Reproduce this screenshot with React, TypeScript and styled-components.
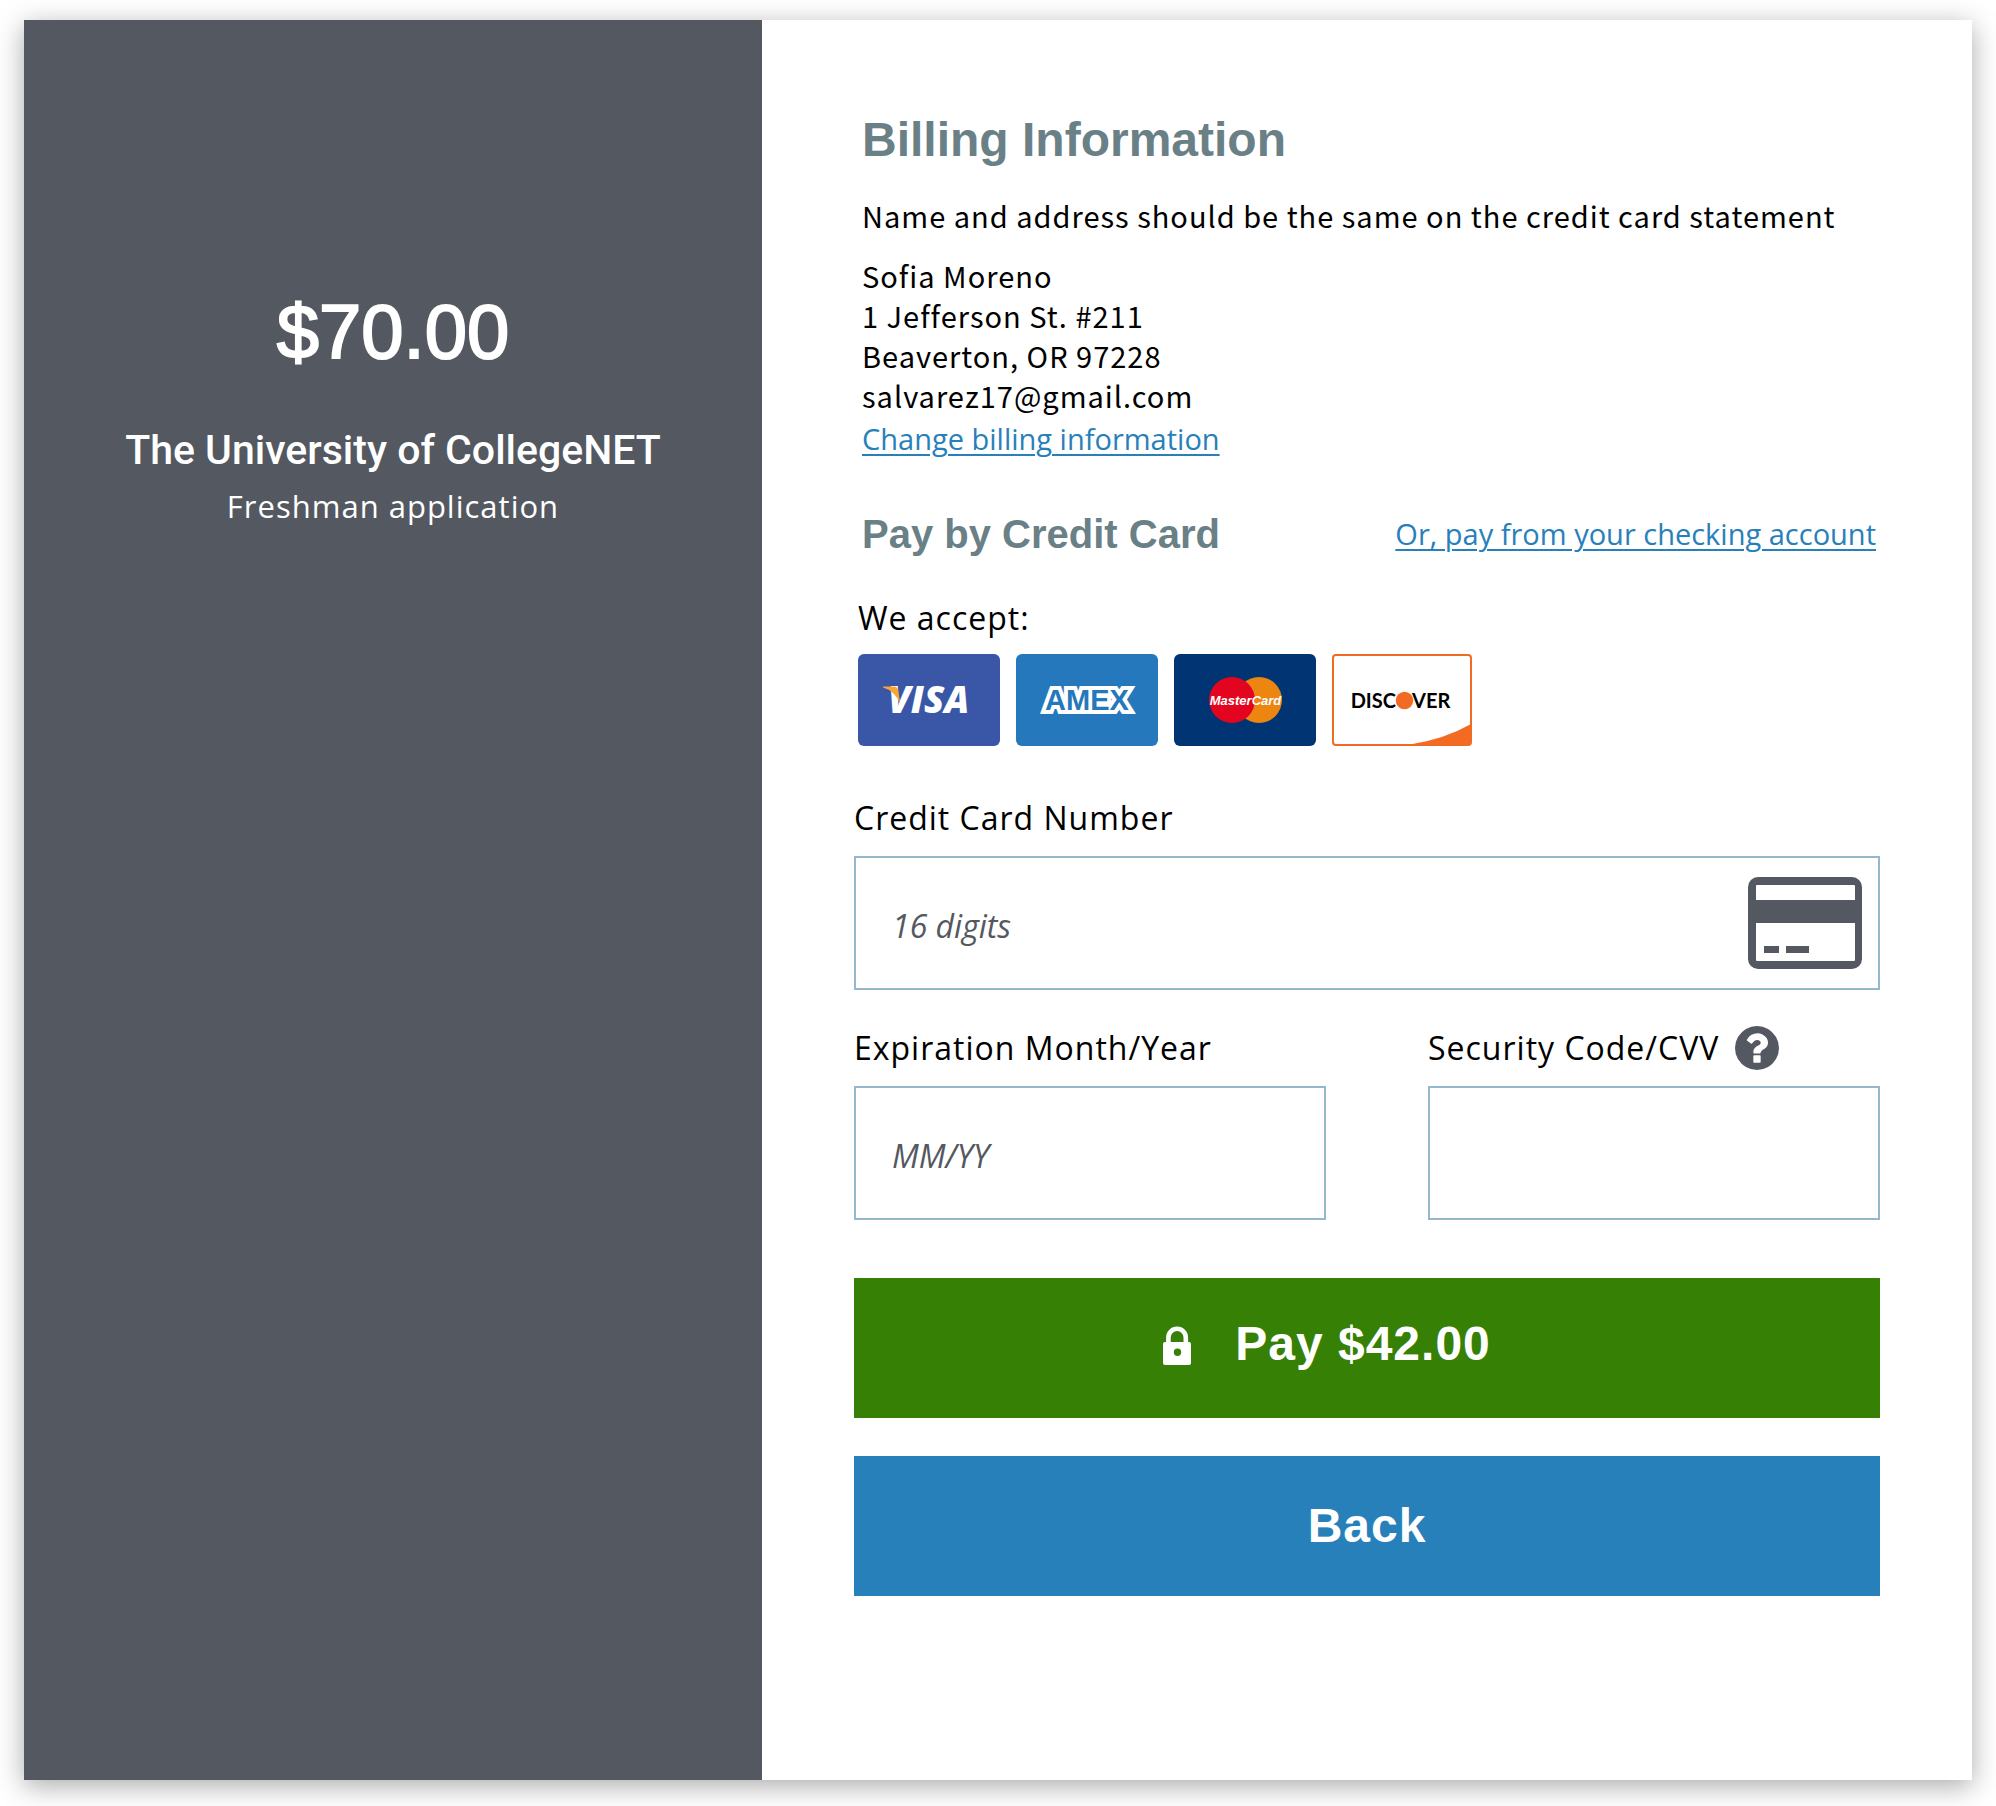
import React from "react";
import styled, { createGlobalStyle } from "styled-components";

const slate = "#545860";
const blue = "#2880ba";
const heading = "#6a8087";
const fieldBorder = "#95b8cc";

const humanist = `"Open Sans", "Noto Sans", sans-serif`;
const grotesk = `"Liberation Sans", Arial, sans-serif`;
const source = `"Noto Sans CJK JP", "Noto Sans", sans-serif`;

const GlobalStyle = createGlobalStyle`
  *, *::before, *::after { box-sizing: border-box; }
  body { margin: 0; background: #fff; color: #000; font-family: ${humanist}; }
  h1, h2, p, address { margin: 0; }
`;

const Page = styled.div`
  display: flex;
  min-height: 100vh;
  padding: 20px 24px 26px;
`;

const Card = styled.main`
  flex: 1;
  display: grid;
  grid-template-columns: minmax(0, 738fr) minmax(0, 1210fr);
  background: #fff;
  box-shadow: 0 6px 26px rgba(0, 0, 0, 0.34);
`;

const Summary = styled.aside`
  display: flex;
  flex-direction: column;
  align-items: center;
  padding: 268px 24px 24px;
  background: ${slate};
  color: #fff;
  text-align: center;
`;

const Price = styled.p`
  font: 400 76px/88px ${grotesk};
  -webkit-text-stroke: 2px #fff;
`;

const School = styled.h2`
  margin-top: 50px;
  font: 500 41px/48px Roboto, sans-serif;
`;

const Application = styled.p`
  margin-top: 8px;
  font-size: 31px;
  line-height: 48px;
  letter-spacing: 1px;
`;

const Details = styled.section`
  display: flex;
  flex-direction: column;
  padding: 92px;
`;

const Billing = styled.section`
  display: flex;
  flex-direction: column;
  align-items: flex-start;
  padding: 0 8px;
`;

const Title = styled.h1`
  color: ${heading};
  font: 700 48px/56px ${grotesk};
`;

const Subtitle = styled.h2`
  color: ${heading};
  font: 700 40px/48px ${grotesk};
`;

const Note = styled.p`
  margin-top: 27px;
  font: 400 29px/40px ${source};
  letter-spacing: 1px;
`;

const Address = styled.address`
  display: flex;
  flex-direction: column;
  margin: 20px 0 4px;
  font: 400 29px/40px ${source};
  letter-spacing: 1px;
`;

const TextLink = styled.a`
  color: ${blue};
  font-size: 29px;
  line-height: 40px;
  text-decoration: underline;
  text-decoration-thickness: 2px;
  text-underline-offset: 4px;
`;

const MethodRow = styled.div`
  display: flex;
  align-items: center;
  justify-content: space-between;
  gap: 24px;
  margin-top: 51px;
  padding: 0 4px 0 8px;
`;

const Accepted = styled.div`
  margin-top: 40px;
  padding: 0 4px;
  font-size: 32px;
  line-height: 40px;
  letter-spacing: 1px;
`;

const Brands = styled.ul`
  display: flex;
  flex-wrap: wrap;
  gap: 16px;
  margin: 16px 0 0;
  padding: 0;
  list-style: none;
  letter-spacing: normal;

  li, svg { display: block; }
`;

const Form = styled.form`
  display: flex;
  flex-direction: column;
  margin-top: 52px;
`;

const FieldPair = styled.div`
  display: grid;
  grid-template-columns: minmax(0, 472fr) minmax(0, 452fr);
  gap: 102px;
  margin-top: 38px;
`;

const Field = styled.div`
  display: flex;
  flex-direction: column;
  gap: 18px;
`;

const LabelRow = styled.div`
  display: flex;
  align-items: center;
  gap: 16px;
  height: 40px;
`;

const Label = styled.label`
  font-size: 32px;
  line-height: 40px;
  letter-spacing: 1px;
`;

const InputBox = styled.div`
  display: flex;
  align-items: center;
  height: 134px;
  border: 2px solid ${fieldBorder};
  padding-right: 16px;
`;

const Input = styled.input`
  flex: 1;
  min-width: 0;
  height: 100%;
  border: 0;
  padding: 4px 0 0 36px;
  background: transparent;
  color: #000;
  font: 400 32px ${humanist};

  &::placeholder {
    color: ${slate};
    font-style: italic;
    opacity: 1;
  }
`;

const HelpButton = styled.button`
  display: flex;
  border: 0;
  padding: 0;
  background: none;
  color: ${slate};
`;

const Actions = styled.div`
  display: grid;
  gap: 38px;
  margin-top: 58px;
`;

const Action = styled.button<{ $tone: string; $withIcon?: boolean }>`
  display: grid;
  grid-template-columns: ${(p) => (p.$withIcon ? "1fr auto 1fr" : "auto")};
  justify-content: center;
  align-items: center;
  column-gap: 44px;
  height: 140px;
  border: 0;
  padding: ${(p) => (p.$withIcon ? "0 8px 8px 0" : "0")};
  background: ${(p) => p.$tone};
  color: #fff;
  font: 700 48px/56px ${grotesk};
  letter-spacing: 1px;

  svg { justify-self: end; }
`;

const VisaLogo = () => (
  <svg width="142" height="92" viewBox="0 0 142 92" role="img" aria-label="Visa">
    <rect width="142" height="92" rx="6" fill="#3a57a7" />
    <text x="30" y="59" fill="#fff" fontFamily="Open Sans" fontSize="37" fontWeight="800" fontStyle="italic">VISA</text>
    <path d="M25 32.500h10.500q4 0 4.700 4l2 12.500Q36 36.500 25 33.500z" fill="#f9a533" />
  </svg>
);

const AmexLogo = () => (
  <svg width="142" height="92" viewBox="0 0 142 92" role="img" aria-label="American Express">
    <rect width="142" height="92" rx="6" fill="#2478bb" />
    <text
      x="71"
      y="56"
      textAnchor="middle"
      fill="#2478bb"
      stroke="#fff"
      strokeWidth="8"
      strokeMiterlimit="3"
      paintOrder="stroke"
      fontFamily="Liberation Sans"
      fontSize="29"
      fontWeight="700"
    >
      AMEX
    </text>
  </svg>
);

const MasterCardLogo = () => (
  <svg width="142" height="92" viewBox="0 0 142 92" role="img" aria-label="MasterCard">
    <rect width="142" height="92" rx="6" fill="#003473" />
    <circle cx="85" cy="46" r="23" fill="#ed8611" />
    <circle cx="58" cy="46" r="23" fill="#e3051f" />
    <text x="71.500" y="51" textAnchor="middle" fill="#fff" fontFamily="Liberation Sans" fontSize="13" fontWeight="700" fontStyle="italic">MasterCard</text>
  </svg>
);

const DiscoverLogo = () => (
  <svg width="140" height="92" viewBox="0 0 140 92" role="img" aria-label="Discover">
    <rect x="1" y="1" width="138" height="90" rx="3" fill="#fff" stroke="#f36a22" strokeWidth="2" />
    <path d="M78 90.500Q113 85 139 70v20.500z" fill="#f36a22" />
    <text x="64" y="54" textAnchor="end" fill="#000" fontFamily="Lato" fontSize="20" fontWeight="700">DISC</text>
    <text x="80" y="54" fill="#000" fontFamily="Lato" fontSize="20" fontWeight="700">VER</text>
    <circle cx="72.500" cy="46.500" r="8.700" fill="#f36a22" />
  </svg>
);

const CardIcon = () => (
  <svg width="114" height="92" viewBox="0 0 114 92" fill={slate} aria-hidden="true">
    <path
      fillRule="evenodd"
      d="M10 0h94a10 10 0 0 1 10 10v72a10 10 0 0 1-10 10H10A10 10 0 0 1 0 82V10A10 10 0 0 1 10 0zM9 8q-1 0-1 1v14h99V9q0-1-1-1zM8 46v37q0 1 1 1h97q1 0 1-1V46z"
    />
    <path d="M16 69h15v7H16zM38 69h23v7H38z" />
  </svg>
);

const HelpIcon = () => (
  <svg width="44" height="44" viewBox="0 128 1536 1536" fill="currentColor" aria-hidden="true">
    <path d="M896 1376v-192q0-14-9-23t-23-9h-192q-14 0-23 9t-9 23v192q0 14 9 23t23 9h192q14 0 23-9t9-23zM1152 704q0-88-55.500-163t-138.500-116-170-41q-243 0-371 213-15 24 8 42l132 100q7 6 19 6 16 0 25-12 53-68 86-92 34-24 86-24 48 0 85.500 26t37.500 59q0 38-20 61t-68 45q-63 28-115.500 86.500t-52.500 125.500v36q0 14 9 23t23 9h192q14 0 23-9t9-23q0-19 21.500-49.500t54.500-49.500q32-18 49-28.500t46-35 44.500-48 28-60.500 12.500-81zM1536 896q0 209-103 385.500t-279.500 279.500-385.500 103-385.500-103-279.500-279.500-103-385.500 103-385.500 279.500-279.500 385.500-103 385.500 103 279.500 279.500 103 385.500z" />
  </svg>
);

const LockIcon = () => (
  <svg width="28" height="44" viewBox="0 -4 28 44" aria-hidden="true">
    <path d="M5.400 18v-6.500a8.700 8.700 0 0 1 17.400 0V18" fill="none" stroke="#fff" strokeWidth="4.600" />
    <path
      fill="#fff"
      fillRule="evenodd"
      d="M2 16h24q2 0 2 2v19q0 2-2 2H2q-2 0-2-2V18q0-2 2-2zm12.500 6.600a3.700 3.700 0 1 0 0 7.400 3.700 3.700 0 0 0 0-7.400z"
    />
  </svg>
);

const brands = [VisaLogo, AmexLogo, MasterCardLogo, DiscoverLogo];
const addressLines = ["Sofia Moreno", "1 Jefferson St. #211", "Beaverton, OR 97228", "salvarez17@gmail.com"];

export default function App() {
  return (
    <>
      <GlobalStyle />
      <Page>
        <Card>
          <Summary>
            <Price>$70.00</Price>
            <School>The University of CollegeNET</School>
            <Application>Freshman application</Application>
          </Summary>
          <Details>
            <Billing>
              <Title>Billing Information</Title>
              <Note>Name and address should be the same on the credit card statement</Note>
              <Address>
                {addressLines.map((line) => (
                  <span key={line}>{line}</span>
                ))}
              </Address>
              <TextLink href="#billing">Change billing information</TextLink>
            </Billing>
            <MethodRow>
              <Subtitle>Pay by Credit Card</Subtitle>
              <TextLink href="#checking">Or, pay from your checking account</TextLink>
            </MethodRow>
            <Accepted>
              <p>We accept:</p>
              <Brands>
                {brands.map((Brand, i) => (
                  <li key={i}>
                    <Brand />
                  </li>
                ))}
              </Brands>
            </Accepted>
            <Form onSubmit={(e) => e.preventDefault()}>
              <Field>
                <Label htmlFor="number">Credit Card Number</Label>
                <InputBox>
                  <Input id="number" inputMode="numeric" placeholder="16 digits" />
                  <CardIcon />
                </InputBox>
              </Field>
              <FieldPair>
                <Field>
                  <Label htmlFor="expiry">Expiration Month/Year</Label>
                  <InputBox>
                    <Input id="expiry" placeholder="MM/YY" />
                  </InputBox>
                </Field>
                <Field>
                  <LabelRow>
                    <Label htmlFor="cvv">Security Code/CVV</Label>
                    <HelpButton type="button" aria-label="About the security code">
                      <HelpIcon />
                    </HelpButton>
                  </LabelRow>
                  <InputBox>
                    <Input id="cvv" inputMode="numeric" />
                  </InputBox>
                </Field>
              </FieldPair>
              <Actions>
                <Action type="submit" $tone="#378006" $withIcon>
                  <LockIcon />
                  <span>Pay $42.00</span>
                </Action>
                <Action type="button" $tone={blue}>
                  Back
                </Action>
              </Actions>
            </Form>
          </Details>
        </Card>
      </Page>
    </>
  );
}
